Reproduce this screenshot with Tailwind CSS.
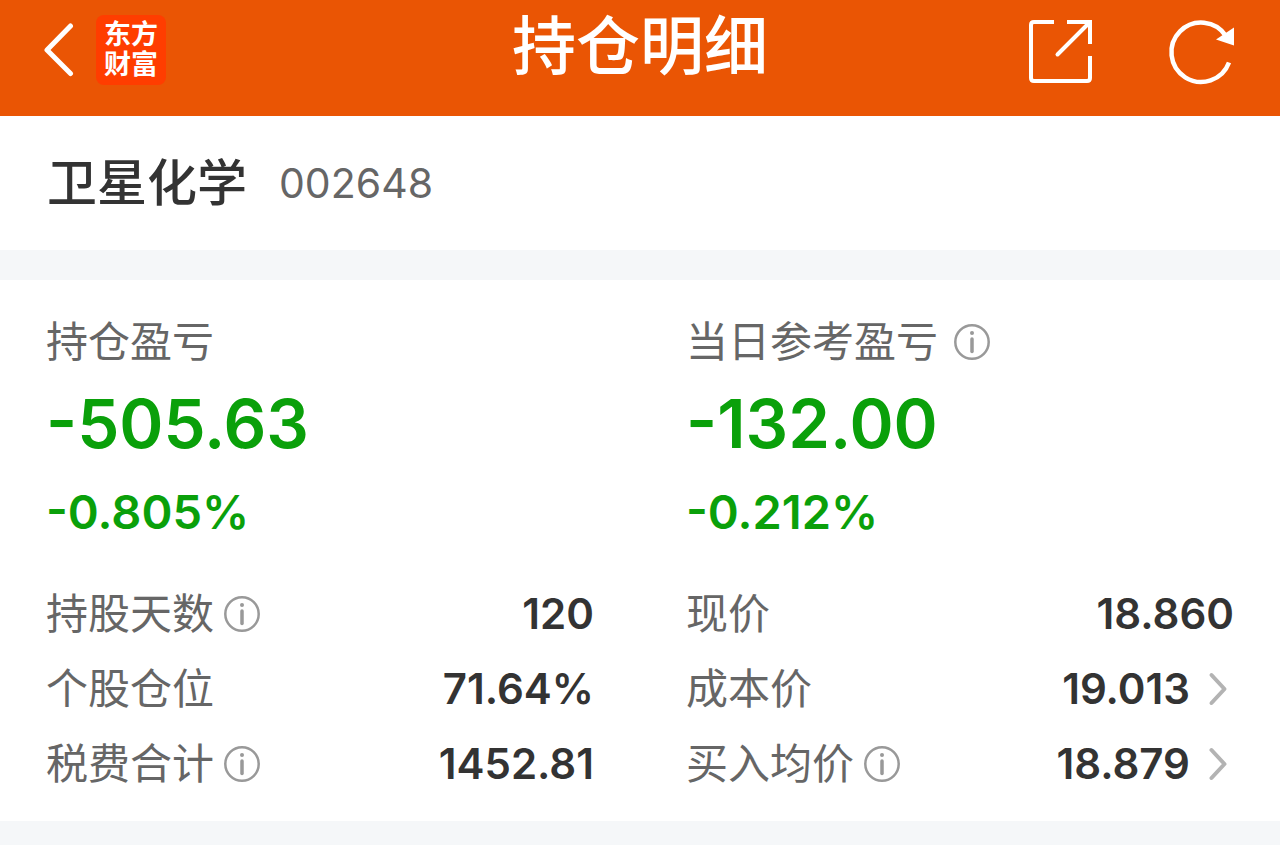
<!DOCTYPE html>
<html lang="zh-CN">

<head>
  <meta charset="UTF-8" />
  <meta name="viewport" content="width=device-width, initial-scale=1.0" />
  <title>持仓明细</title>
  <script src="https://cdn.jsdelivr.net/npm/@tailwindcss/browser@4"></script>
</head>

<body class="bg-white text-[#333] font-['Inter','Noto_Sans_CJK_SC',sans-serif]">
  <!-- Header -->
  <header class="grid grid-cols-[1fr_auto_1fr] items-center bg-[#ea5504] text-white px-11 pb-4 h-[116px]">
    <div class="flex items-center gap-5">
      <button type="button" aria-label="返回">
        <svg class="block w-8 h-14" viewBox="5 0 32 56" fill="none" stroke="currentColor" stroke-width="5"
          stroke-linecap="round" stroke-linejoin="round">
          <path d="M31.500 4L8 28L31.500 51.500" />
        </svg>
      </button>
      <div class="w-[70px] h-[70px] rounded-lg bg-[#ff3d00] flex flex-col items-center justify-center text-[27px] leading-[30px] font-bold">
        <span>东方</span>
        <span>财富</span>
      </div>
    </div>
    <h1 class="text-[64px] leading-[92px] font-medium pb-2">持仓明细</h1>
    <div class="flex items-center justify-end gap-[74px]">
      <button type="button" aria-label="分享">
        <svg class="block w-[66px] h-[66px] overflow-visible" viewBox="2 0 66 66" fill="none" stroke="currentColor" stroke-width="4">
          <path d="M26 5H6Q3 5 3 8V61Q3 64 6 64H59Q62 64 62 61V39" />
          <path d="M39 5H62V27" />
          <path d="M29.500 37.500L61 6" stroke-linecap="round" />
        </svg>
      </button>
      <button type="button" aria-label="刷新">
        <svg class="block w-[66px] h-[66px] overflow-visible" viewBox="2 0 66 66" fill="none" stroke="currentColor" stroke-width="4.500">
          <path d="M58 19A29.700 29.700 0 1 0 61 45.500" />
          <path d="M48 22.500L66 10.500V28.500Z" fill="currentColor" stroke="none" />
        </svg>
      </button>
    </div>
  </header>

  <main>
    <!-- Stock name -->
    <section class="flex items-center gap-8 px-[47px] h-[134px]">
      <h2 class="text-[50px] leading-[72px] font-medium">卫星化学</h2>
      <span class="text-[41px] leading-[60px] text-[#666]">002648</span>
    </section>

    <!-- Position details -->
    <section class="grid grid-cols-2 border-t-[30px] border-b-[24px] border-[#f5f7f9] pt-8 pb-5">
      <div class="px-[46px]">
        <h3 class="text-[42px] leading-[60px] text-[#666]">持仓盈亏</h3>
        <p class="text-[67px] leading-[104px] font-semibold text-[#0aa00a]">-505.63</p>
        <p class="text-[47px] leading-[72px] font-semibold text-[#0aa00a]">-0.805%</p>
        <dl class="mt-7 text-[42px] leading-[75px]">
          <div class="flex items-center justify-between">
            <dt class="flex items-center gap-[10px] text-[#666]">持股天数
              <button type="button" aria-label="持股天数说明">
                <svg class="block w-9 h-9" viewBox="0 0 36 36" fill="none" stroke="#999" stroke-width="2.500">
                  <circle cx="18" cy="18" r="16.700" />
                  <path d="M18 15V27.500" stroke-width="3.500" stroke-linecap="round" />
                  <circle cx="18" cy="9" r="2" fill="#999" stroke="none" />
                </svg>
              </button>
            </dt>
            <dd class="font-semibold">120</dd>
          </div>
          <div class="flex items-center justify-between">
            <dt class="text-[#666]">个股仓位</dt>
            <dd class="font-semibold">71.64%</dd>
          </div>
          <div class="flex items-center justify-between">
            <dt class="flex items-center gap-[10px] text-[#666]">税费合计
              <button type="button" aria-label="税费合计说明">
                <svg class="block w-9 h-9" viewBox="0 0 36 36" fill="none" stroke="#999" stroke-width="2.500">
                  <circle cx="18" cy="18" r="16.700" />
                  <path d="M18 15V27.500" stroke-width="3.500" stroke-linecap="round" />
                  <circle cx="18" cy="9" r="2" fill="#999" stroke="none" />
                </svg>
              </button>
            </dt>
            <dd class="font-semibold">1452.81</dd>
          </div>
        </dl>
      </div>

      <div class="px-[46px]">
        <h3 class="flex items-center gap-4 text-[42px] leading-[60px] text-[#666]">当日参考盈亏
          <button type="button" aria-label="当日参考盈亏说明">
            <svg class="block w-9 h-9" viewBox="0 0 36 36" fill="none" stroke="#999" stroke-width="2.500">
              <circle cx="18" cy="18" r="16.700" />
              <path d="M18 15V27.500" stroke-width="3.500" stroke-linecap="round" />
              <circle cx="18" cy="9" r="2" fill="#999" stroke="none" />
            </svg>
          </button>
        </h3>
        <p class="text-[67px] leading-[104px] font-semibold text-[#0aa00a]">-132.00</p>
        <p class="text-[47px] leading-[72px] font-semibold text-[#0aa00a]">-0.212%</p>
        <dl class="mt-7 text-[42px] leading-[75px]">
          <div class="flex items-center justify-between">
            <dt class="text-[#666]">现价</dt>
            <dd class="font-semibold">18.860</dd>
          </div>
          <div class="flex items-center justify-between">
            <dt class="text-[#666]">成本价</dt>
            <dd class="flex items-center font-semibold">19.013
              <button type="button" aria-label="查看成本价">
                <svg class="block w-11 h-9" viewBox="0 0 44 36" fill="none" stroke="#b3b3b3" stroke-width="4"
                  stroke-linecap="round" stroke-linejoin="round">
                  <path d="M21.500 4L34.500 18L21.500 32" />
                </svg>
              </button>
            </dd>
          </div>
          <div class="flex items-center justify-between">
            <dt class="flex items-center gap-[10px] text-[#666]">买入均价
              <button type="button" aria-label="买入均价说明">
                <svg class="block w-9 h-9" viewBox="0 0 36 36" fill="none" stroke="#999" stroke-width="2.500">
                  <circle cx="18" cy="18" r="16.700" />
                  <path d="M18 15V27.500" stroke-width="3.500" stroke-linecap="round" />
                  <circle cx="18" cy="9" r="2" fill="#999" stroke="none" />
                </svg>
              </button>
            </dt>
            <dd class="flex items-center font-semibold">18.879
              <button type="button" aria-label="查看买入均价">
                <svg class="block w-11 h-9" viewBox="0 0 44 36" fill="none" stroke="#b3b3b3" stroke-width="4"
                  stroke-linecap="round" stroke-linejoin="round">
                  <path d="M21.500 4L34.500 18L21.500 32" />
                </svg>
              </button>
            </dd>
          </div>
        </dl>
      </div>
    </section>
  </main>
</body>

</html>
